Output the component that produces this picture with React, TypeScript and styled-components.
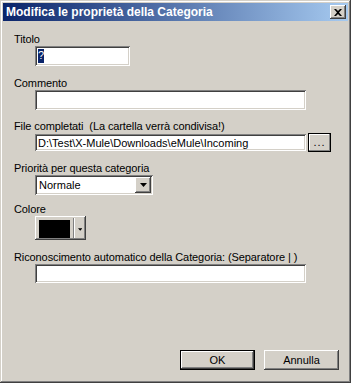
import React from 'react'
import styled, { createGlobalStyle } from 'styled-components'

const GlobalStyle = createGlobalStyle`
  html, body {
    margin: 0;
    padding: 0;
    background: #d4d0c8;
  }
  * {
    box-sizing: border-box;
  }
`

const raised = `
  box-shadow: inset -1px -1px #404040, inset 1px 1px #ffffff, inset -2px -2px #808080, inset 2px 2px #d4d0c8;
`

const sunken = `
  box-shadow: inset 1px 1px #808080, inset -1px -1px #ffffff, inset 2px 2px #404040, inset -2px -2px #d4d0c8;
`

const Window = styled.div`
  width: 351px;
  height: 383px;
  padding: 3px;
  display: flex;
  flex-direction: column;
  background: #d4d0c8;
  font-family: 'Liberation Sans', Arial, sans-serif;
  font-size: 11px;
  color: #000;
  box-shadow: inset -1px -1px #404040, inset 1px 1px #d4d0c8, inset -2px -2px #808080, inset 2px 2px #ffffff;
`

const TitleBar = styled.div`
  height: 18px;
  display: flex;
  align-items: center;
  justify-content: space-between;
  padding: 0 2px 0 3px;
  background: linear-gradient(to right, #0a246a, #a6caf0);
`

const TitleText = styled.span`
  color: #fff;
  font-weight: bold;
  font-size: 12px;
`

const CloseButton = styled.div`
  width: 16px;
  height: 14px;
  display: flex;
  align-items: center;
  justify-content: center;
  background: #d4d0c8;
  ${raised}
`

const Client = styled.div`
  flex: 1;
  display: flex;
  flex-direction: column;
  padding: 12px 0 10px 11px;
`

const Label = styled.div<{ $top: number }>`
  margin-top: ${({ $top }) => $top}px;
  line-height: 13px;
  letter-spacing: -0.1px;
  white-space: pre;
`

const ControlRow = styled.div`
  display: flex;
  align-items: center;
  gap: 2px;
  margin-left: 21px;
`

const TextBox = styled.div<{ $width: number; $height: number }>`
  width: ${({ $width }) => $width}px;
  height: ${({ $height }) => $height}px;
  background: #fff;
  display: flex;
  align-items: center;
  padding-left: 3px;
  white-space: pre;
  ${sunken}
`

const Selected = styled.span`
  background: #0a246a;
  color: #fff;
  padding: 0 0 1px;
  line-height: 13px;
`

const SmallButton = styled.div`
  width: 23px;
  height: 19px;
  display: flex;
  align-items: center;
  justify-content: center;
  padding-bottom: 2px;
  border: 1px solid #000;
  box-shadow: inset -1px -1px #808080, inset 1px 1px #ffffff;
  letter-spacing: 1px;
`

const Combo = styled.div`
  width: 118px;
  height: 20px;
  background: #fff;
  display: flex;
  align-items: center;
  justify-content: space-between;
  padding: 2px;
  ${sunken}
`

const ComboText = styled.span`
  padding-left: 2px;
`

const ArrowButton = styled.div`
  width: 16px;
  height: 16px;
  display: flex;
  align-items: center;
  justify-content: center;
  background: #d4d0c8;
  ${raised}
`

const ColorButton = styled.div`
  width: 51px;
  height: 24px;
  display: flex;
  align-items: center;
  padding: 4px 4px 2px 4px;
  gap: 3px;
  ${raised}
`

const Swatch = styled.div`
  width: 34px;
  height: 18px;
  background: #000;
`

const Divider = styled.div`
  width: 2px;
  height: 20px;
  border-left: 1px solid #808080;
  border-right: 1px solid #ffffff;
  margin-top: -2px;
`

const ButtonBar = styled.div`
  margin-top: auto;
  display: flex;
  justify-content: flex-end;
  gap: 9px;
  padding-right: 9px;
`

const DialogButton = styled.div<{ $default?: boolean }>`
  width: 75px;
  height: 20px;
  display: flex;
  align-items: center;
  justify-content: center;
  ${({ $default }) =>
    $default
      ? 'border: 1px solid #000; box-shadow: inset -1px -1px #404040, inset 1px 1px #ffffff, inset -2px -2px #808080;'
      : raised}
`

const Triangle = () => (
  <svg width="7" height="4" viewBox="0 0 7 4">
    <path d="M0 0h7L3.5 4z" fill="#000" />
  </svg>
)

const SmallTriangle = () => (
  <svg width="5" height="3" viewBox="0 0 5 3">
    <path d="M0 0h5L2.5 3z" fill="#000" />
  </svg>
)

const CloseIcon = () => (
  <svg width="8" height="7" viewBox="0 0 8 7">
    <path d="M0 0h2l2 2 2-2h2L5 3.5 8 7H6L4 5 2 7H0l3-3.5z" fill="#000" />
  </svg>
)

export default function App() {
  return (
    <>
      <GlobalStyle />
      <Window>
        <TitleBar>
          <TitleText>Modifica le proprietà della Categoria</TitleText>
          <CloseButton>
            <CloseIcon />
          </CloseButton>
        </TitleBar>
        <Client>
          <Label $top={0}>Titolo</Label>
          <ControlRow>
            <TextBox $width={95} $height={20}>
              <Selected>?</Selected>
            </TextBox>
          </ControlRow>

          <Label $top={11}>Commento</Label>
          <ControlRow>
            <TextBox $width={271} $height={20} />
          </ControlRow>

          <Label $top={10}>File completati  (La cartella verrà condivisa!)</Label>
          <ControlRow>
            <TextBox $width={271} $height={17}>D:\Test\X-Mule\Downloads\eMule\Incoming</TextBox>
            <SmallButton>...</SmallButton>
          </ControlRow>

          <Label $top={10}>Priorità per questa categoria</Label>
          <ControlRow>
            <Combo>
              <ComboText>Normale</ComboText>
              <ArrowButton>
                <Triangle />
              </ArrowButton>
            </Combo>
          </ControlRow>

          <Label $top={8}>Colore</Label>
          <ControlRow>
            <ColorButton>
              <Swatch />
              <Divider />
              <SmallTriangle />
            </ColorButton>
          </ControlRow>

          <Label $top={11}>Riconoscimento automatico della Categoria: (Separatore | )</Label>
          <ControlRow>
            <TextBox $width={271} $height={19} />
          </ControlRow>

          <ButtonBar>
            <DialogButton $default>OK</DialogButton>
            <DialogButton>Annulla</DialogButton>
          </ButtonBar>
        </Client>
      </Window>
    </>
  )
}
